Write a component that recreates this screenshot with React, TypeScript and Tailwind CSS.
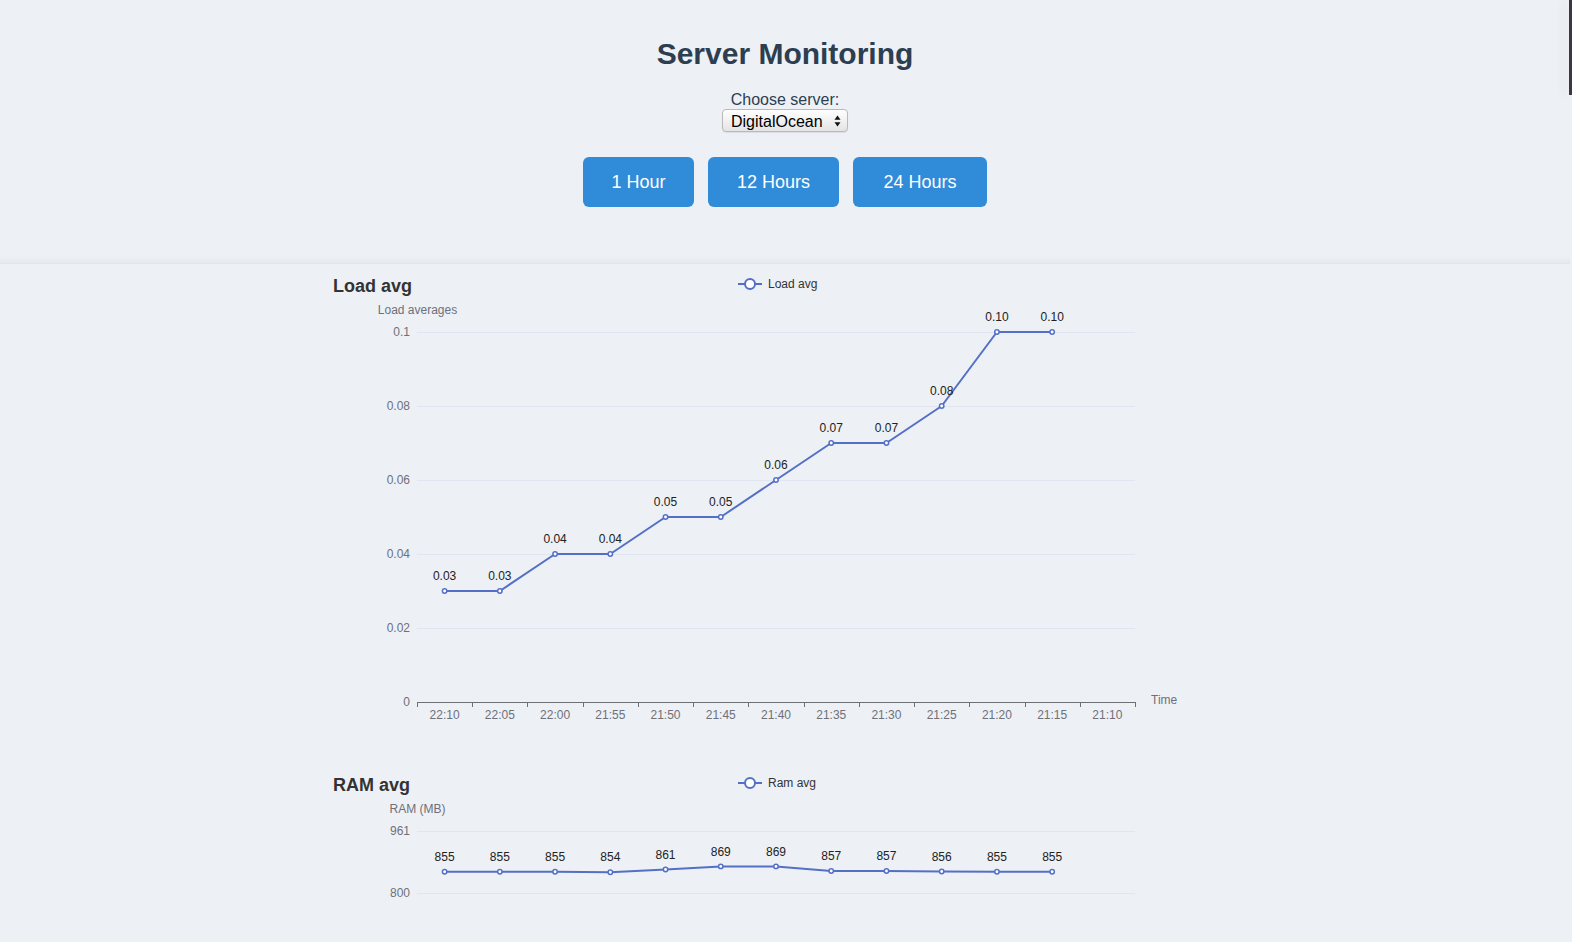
import React from "react";

const FONT = '"Liberation Sans", Arial, Helvetica, sans-serif';
const CATS = ["22:10", "22:05", "22:00", "21:55", "21:50", "21:45", "21:40", "21:35", "21:30", "21:25", "21:20", "21:15", "21:10"];

const GL = 415;
const GR = 1133;
const GT = 66;
const GB = 436;
const CW = (GR - GL) / CATS.length;

type ChartProps = {
  title: string;
  legend: string;
  yName: string;
  max: number;
  ticks: { v: number; label: string }[];
  data: number[];
  fmt: (v: number) => string;
  height?: number;
};

function Chart({ title, legend, yName, max, ticks, data, fmt, height = 500 }: ChartProps) {
  const yOf = (v: number) => GB - (v / max) * (GB - GT);
  const xOf = (i: number) => GL + CW * (i + 0.5);
  const pts = data.map((v, i) => `${xOf(i)},${yOf(v)}`).join(" ");
  const showAxis = height >= 460;
  return (
    <svg width={920} height={height} viewBox={`322 0 920 ${height}`} className="block" style={{ fontFamily: FONT }}>
      <text x={331} y={21} fontSize={18} fontWeight="bold" fill="#333" dominantBaseline="middle">
        {title}
      </text>
      <line x1={736} y1={18} x2={760} y2={18} stroke="#5470c6" strokeWidth={2} />
      <circle cx={748} cy={18} r={5} fill="#fff" stroke="#5470c6" strokeWidth={2} />
      <text x={766} y={18.5} fontSize={12} fill="#333" dominantBaseline="middle">
        {legend}
      </text>
      <text x={415.5} y={45} fontSize={12} fill="#6e7079" textAnchor="middle" dominantBaseline="middle">
        {yName}
      </text>
      {ticks
        .filter((t) => yOf(t.v) < height - 8)
        .map((t) => {
          const y = Math.round(yOf(t.v)) + 0.5;
          return (
            <g key={t.label}>
              {t.v !== 0 && <line x1={GL} y1={y} x2={GR} y2={y} stroke="#e0e6f1" strokeWidth={1} />}
              <text x={408} y={y} fontSize={12} fill="#6e7079" textAnchor="end" dominantBaseline="middle">
                {t.label}
              </text>
            </g>
          );
        })}
      {showAxis && (
        <g>
          <line x1={GL} y1={GB + 0.5} x2={GR} y2={GB + 0.5} stroke="#6e7079" strokeWidth={1} />
          {CATS.map((c, i) => (
            <line key={"t" + i} x1={Math.round(GL + CW * i) + 0.5} y1={GB} x2={Math.round(GL + CW * i) + 0.5} y2={GB + 5} stroke="#6e7079" strokeWidth={1} />
          ))}
          <line x1={GR + 0.5} y1={GB} x2={GR + 0.5} y2={GB + 5} stroke="#6e7079" strokeWidth={1} />
          {CATS.map((c, i) => (
            <text key={c} x={xOf(i)} y={449.5} fontSize={12} fill="#6e7079" textAnchor="middle" dominantBaseline="middle">
              {c}
            </text>
          ))}
          <text x={1149} y={435} fontSize={12} fill="#6e7079" dominantBaseline="middle">
            Time
          </text>
        </g>
      )}
      <polyline points={pts} fill="none" stroke="#5470c6" strokeWidth={2} strokeLinejoin="round" />
      {data.map((v, i) => (
        <g key={"p" + i}>
          <circle cx={xOf(i)} cy={yOf(v)} r={2.2} fill="#fff" stroke="#5470c6" strokeWidth={1.5} />
          <text x={xOf(i)} y={yOf(v) - 14} fontSize={12} fill="#222" textAnchor="middle" dominantBaseline="middle">
            {fmt(v)}
          </text>
        </g>
      ))}
    </svg>
  );
}

function Select() {
  return (
    <div className="relative h-[23px] w-[126px] rounded-[4px] border border-[#b9b9b9] bg-linear-to-b from-white to-[#e4e4e4] shadow-[0_1px_1px_rgba(0,0,0,0.08)]">
      <select
        className="h-full w-full appearance-none bg-transparent pl-[8px] pr-[20px] text-[16px] leading-[21px] text-black outline-none"
        style={{ fontFamily: FONT }}
        defaultValue="DigitalOcean"
      >
        <option>DigitalOcean</option>
      </select>
      <svg className="pointer-events-none absolute right-[6px] top-[5px]" width={7} height={12} viewBox="0 0 7 12">
        <path d="M3.5 0.5 L6.5 4.8 L0.5 4.8 Z" fill="#111" />
        <path d="M3.5 11.5 L6.5 7.2 L0.5 7.2 Z" fill="#111" />
      </svg>
    </div>
  );
}

export default function App() {
  const load = [0.03, 0.03, 0.04, 0.04, 0.05, 0.05, 0.06, 0.07, 0.07, 0.08, 0.1, 0.1];
  const ram = [855, 855, 855, 854, 861, 869, 869, 857, 857, 856, 855, 855];
  return (
    <div className="relative h-[942px] w-full overflow-hidden bg-[#edf0f5]" style={{ fontFamily: FONT }}>
      <header className="flex w-[1570px] flex-col items-center border-b border-[#e2e5ea] pb-[56px] pt-[36px] shadow-[inset_0_-8px_8px_-8px_rgba(0,0,0,0.07)]">
        <h1 className="text-[30px] font-bold leading-[36px] text-[#2c3e50]">Server Monitoring</h1>
        <label className="mt-[19px] text-[16px] leading-[18px] text-[#2c3e50]">Choose server:</label>
        <Select />
        <div className="mt-[25px] flex gap-[14px]">
          <button className="h-[50px] w-[111px] rounded-[6px] bg-[#308cd8] text-[18px] text-white">1 Hour</button>
          <button className="h-[50px] w-[131px] rounded-[6px] bg-[#308cd8] text-[18px] text-white">12 Hours</button>
          <button className="h-[50px] w-[134px] rounded-[6px] bg-[#308cd8] text-[18px] text-white">24 Hours</button>
        </div>
      </header>
      <main className="flex w-[1568px] flex-col items-center pt-[2px]">
        <Chart
          title="Load avg"
          legend="Load avg"
          yName="Load averages"
          max={0.1}
          ticks={[
            { v: 0.1, label: "0.1" },
            { v: 0.08, label: "0.08" },
            { v: 0.06, label: "0.06" },
            { v: 0.04, label: "0.04" },
            { v: 0.02, label: "0.02" },
            { v: 0, label: "0" },
          ]}
          data={load}
          fmt={(v) => v.toFixed(2)}
        />
        <div className="-mt-[1px]">
          <Chart
            title="RAM avg"
            legend="Ram avg"
            yName="RAM (MB)"
            max={961}
            height={180}
            ticks={[
              { v: 961, label: "961" },
              { v: 800, label: "800" },
              { v: 600, label: "600" },
              { v: 400, label: "400" },
              { v: 200, label: "200" },
              { v: 0, label: "0" },
            ]}
            data={ram}
            fmt={(v) => String(v)}
          />
        </div>
      </main>
      <div className="absolute right-0 top-0 h-[95px] w-[3px] bg-[#3a3a3a] shadow-[-6px_0_10px_rgba(0,0,0,0.06)]" />
    </div>
  );
}
